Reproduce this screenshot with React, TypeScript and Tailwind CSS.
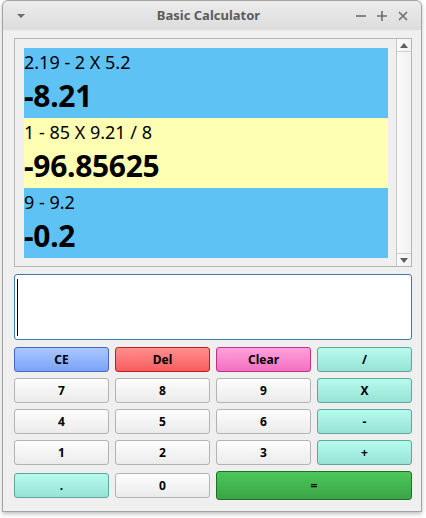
import React from 'react';

const history = [
  { expr: '2.19 - 2 X 5.2', result: '-8.21', bg: 'bg-[#5ec3f4]' },
  { expr: '1 - 85 X 9.21 / 8', result: '-96.85625', bg: 'bg-[#ffffb3]' },
  { expr: '9 - 9.2', result: '-0.2', bg: 'bg-[#5ec3f4]' },
];

const styles: Record<string, string> = {
  num: 'bg-gradient-to-b from-[#fdfdfd] to-[#ebebeb] border-[#b3b3b3]',
  op: 'bg-gradient-to-b from-[#b6fbee] to-[#97e2d6] border-[#5fa69b]',
  ce: 'bg-gradient-to-b from-[#aac6ff] to-[#7ba3f7] border-[#4669bd]',
  del: 'bg-gradient-to-b from-[#ff8e8e] to-[#f65d5d] border-[#c21d1d]',
  clear: 'bg-gradient-to-b from-[#ffa0da] to-[#f26fc2] border-[#c12f83]',
  eq: 'bg-gradient-to-b from-[#4cc75a] to-[#3aa545] border-[#236d2a]',
};

function Btn({ label, kind, className = '' }: { label: string; kind: string; className?: string }) {
  return (
    <button
      className={`h-[25px] rounded-[3px] border text-[12px] font-bold text-black leading-none ${styles[kind]} ${className}`}
    >
      {label}
    </button>
  );
}

export default function App() {
  return (
    <div
      className="w-[426px] h-[518px] bg-white overflow-hidden"
      style={{ fontFamily: '"Noto Sans", "Open Sans", sans-serif' }}
    >
      <div className="ml-[2px] w-[420px] h-[512px] border border-[#a3a3a3] rounded-t-[6px] bg-[#efefef] shadow-[0_2px_4px_rgba(0,0,0,0.25)] flex flex-col">
        {/* Title bar */}
        <div className="h-[29px] rounded-t-[6px] bg-gradient-to-b from-[#ececec] to-[#dcdcdc] flex items-center px-[10px] text-[#5c5c5c]">
          <svg width="14" height="10" viewBox="0 0 14 10" className="ml-[1px]">
            <path d="M3 3 L11 3 L7 7 Z" fill="#6b6b6b" />
          </svg>
          <div className="flex-1 text-center text-[13px] font-bold pl-[34px]">Basic Calculator</div>
          <div className="flex items-center gap-[9px] mr-[2px]">
            <svg width="12" height="12" viewBox="0 0 12 12">
              <path d="M1 6 H11" stroke="#6e6e6e" strokeWidth="1.6" />
            </svg>
            <svg width="12" height="12" viewBox="0 0 12 12">
              <path d="M1 6 H11 M6 1 V11" stroke="#6e6e6e" strokeWidth="1.6" />
            </svg>
            <svg width="12" height="12" viewBox="0 0 12 12">
              <path d="M2 2 L10 10 M10 2 L2 10" stroke="#6e6e6e" strokeWidth="1.6" />
            </svg>
          </div>
        </div>

        <div className="pl-[11px] pr-[9px] pt-[8px] flex flex-col">
          {/* History list */}
          <div className="h-[229px] border border-[#b6b6b6] bg-[#efefef] flex">
            <div className="flex-1 pl-[9px] pt-[9px] pr-[8px]">
              {history.map((h) => (
                <div key={h.expr} className={`h-[70px] ${h.bg} text-black pt-[2px]`}>
                  <div className="text-[18px] leading-[24px]">{h.expr}</div>
                  <div className="text-[30px] font-bold leading-[44px] tracking-[-0.3px]">{h.result}</div>
                </div>
              ))}
            </div>
            <div className="w-[15px] border-l border-[#c6c6c6] bg-gradient-to-r from-[#fafafa] to-[#f1f1f1] flex flex-col justify-between">
              <div className="h-[13px] border-b border-[#cfcfcf] flex items-center justify-center">
                <svg width="8" height="5" viewBox="0 0 8 5">
                  <path d="M0 5 L4 0 L8 5 Z" fill="#5e5e5e" />
                </svg>
              </div>
              <div className="h-[13px] border-t border-[#cfcfcf] flex items-center justify-center">
                <svg width="8" height="5" viewBox="0 0 8 5">
                  <path d="M0 0 L8 0 L4 5 Z" fill="#5e5e5e" />
                </svg>
              </div>
            </div>
          </div>

          {/* Input */}
          <div className="mt-[7px] h-[66px] bg-white border border-[#3d79ad] rounded-[3px] flex items-center pl-[2px]">
            <div className="w-[1px] h-[57px] bg-black" />
          </div>

          {/* Keypad */}
          <div className="mt-[7px] grid grid-cols-4 gap-x-[6px] gap-y-[6px]">
            <Btn label="CE" kind="ce" />
            <Btn label="Del" kind="del" />
            <Btn label="Clear" kind="clear" />
            <Btn label="/" kind="op" />
            <Btn label="7" kind="num" />
            <Btn label="8" kind="num" />
            <Btn label="9" kind="num" />
            <Btn label="X" kind="op" />
            <Btn label="4" kind="num" />
            <Btn label="5" kind="num" />
            <Btn label="6" kind="num" />
            <Btn label="-" kind="op" />
            <Btn label="1" kind="num" />
            <Btn label="2" kind="num" />
            <Btn label="3" kind="num" />
            <Btn label="+" kind="op" />
            <div className="h-[29px] flex items-center">
              <Btn label="." kind="op" className="w-full" />
            </div>
            <div className="h-[29px] flex items-center">
              <Btn label="0" kind="num" className="w-full" />
            </div>
            <Btn label="=" kind="eq" className="col-span-2 !h-[29px]" />
          </div>
        </div>
      </div>
    </div>
  );
}
